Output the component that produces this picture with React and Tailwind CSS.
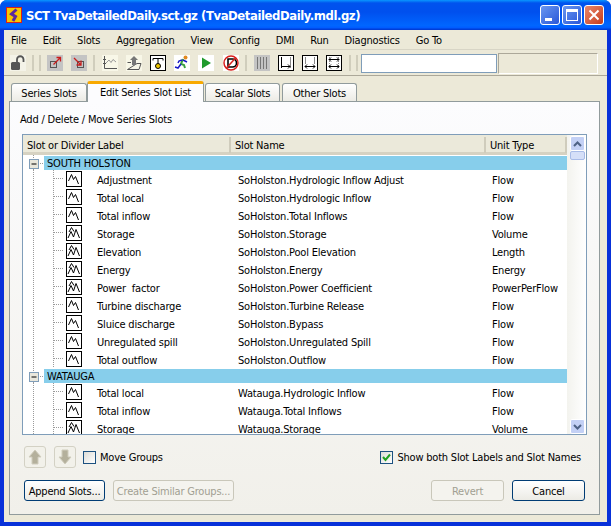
import React from "react";

const FONT = "font-['DejaVu_Sans_Condensed','DejaVu_Sans',sans-serif]";

const Spark1 = () => (
  <svg width="16" height="16" viewBox="0 0 16 16" className="shrink-0">
    <rect x="0.5" y="0.5" width="15" height="15" fill="#fff" stroke="#000" />
    <path d="M2.5 10 L5.5 3.5 L7.5 8.5 L9.5 5.5 L12.5 13" fill="none" stroke="#000" />
  </svg>
);
const Spark2 = () => (
  <svg width="16" height="16" viewBox="0 0 16 16" className="shrink-0">
    <rect x="0.5" y="0.5" width="15" height="15" fill="#fff" stroke="#000" />
    <path d="M3 7 L5.5 2.5 L8 6.5" fill="none" stroke="#000" />
    <path d="M2 13 L5 6.5 L7.5 12 L10 4.5 L13.5 13" fill="none" stroke="#000" />
  </svg>
);

const TreeLines = () => (
  <svg width="43" height="18" className="shrink-0">
    <path d="M10.5 0 V18" stroke="#9a9a9a" strokeDasharray="1 1" />
    <path d="M30.5 0 V18" stroke="#9a9a9a" strokeDasharray="1 1" />
    <path d="M31 8.5 H41" stroke="#9a9a9a" strokeDasharray="1 1" />
  </svg>
);

const Group = ({ name }) => (
  <div className="flex h-[15px] items-end">
    <div className="flex h-[15px] w-[21px] shrink-0 items-center">
      <svg width="21" height="15">
        <path d="M10.5 0 V15" stroke="#9a9a9a" strokeDasharray="1 1" />
        <path d="M15 8.5 H20" stroke="#9a9a9a" strokeDasharray="1 1" />
        <rect x="6.5" y="4.5" width="9" height="9" fill="#e9e7dc" stroke="#7f9db9" />
        <path d="M8.5 9 H13.5" stroke="#000" />
      </svg>
    </div>
    <div className="flex h-[14px] w-[524px] items-center bg-[#87ceeb] pl-[3px] text-black">{name}</div>
  </div>
);

const Row = ({ label, name, unit, two }) => (
  <div className="flex h-[18px] items-center">
    <TreeLines />
    {two ? <Spark2 /> : <Spark1 />}
    <span className="ml-[15px] w-[141px] shrink-0 whitespace-pre pt-[2px]">{label}</span>
    <span className="w-[254px] shrink-0 whitespace-nowrap pt-[2px]">{name}</span>
    <span className="whitespace-nowrap pt-[2px]">{unit}</span>
  </div>
);

const Tool = ({ children, className = "" }) => (
  <div className={`flex h-4 w-4 shrink-0 items-center justify-center ${className}`}>{children}</div>
);
const Sep = ({ className = "" }) => <div className={`h-[16px] w-[2px] shrink-0 bg-[#d0cdbc] ${className}`} />;

const OutlineBox = ({ children }) => (
  <svg width="16" height="16" viewBox="0 0 16 16">
    <rect x="0.5" y="0.5" width="15" height="15" fill="#fff" stroke="#000" />
    {children}
  </svg>
);

const Tab = ({ children, active, className = "" }) =>
  active ? (
    <div className={`relative z-10 -mb-px flex h-[21px] items-center justify-center rounded-t-[3px] border-x border-[#919b9c] border-t-[3px] border-t-[#f8a900] bg-[#fcfcfe] pb-[1px] text-black ${className}`}>
      {children}
    </div>
  ) : (
    <div className={`flex h-[18px] items-center justify-center rounded-t-[3px] border-x border-t border-[#919b9c] bg-gradient-to-b from-white to-[#ecebe5] pt-[2px] text-black ${className}`}>
      {children}
    </div>
  );

const Btn = ({ children, disabled, className = "" }) => (
  <div
    className={`flex h-[21px] items-center justify-center rounded-[3px] border pt-[2px] ${
      disabled
        ? "border-[#c9c7ba] bg-[#f4f3ee] text-[#a19f92]"
        : "border-[#003c74] bg-gradient-to-b from-white to-[#ecebe5] text-black"
    } ${className}`}
  >
    {children}
  </div>
);

const ArrowBtn = ({ down }) => (
  <div className="flex h-[22px] w-[22px] shrink-0 items-center justify-center rounded-[3px] border border-[#d3d1c4] bg-[#f2f1ea]">
    <svg width="14" height="16" viewBox="0 0 14 16">
      <path
        d={down ? "M4 1 H10 V8 H13 L7 15 L1 8 H4 Z" : "M4 15 H10 V8 H13 L7 1 L1 8 H4 Z"}
        fill="#b4b09c"
        stroke="#cfccbd"
      />
    </svg>
  </div>
);

const rowsA = [
  ["Adjustment", "SoHolston.Hydrologic Inflow Adjust", "Flow", 0],
  ["Total local", "SoHolston.Hydrologic Inflow", "Flow", 0],
  ["Total inflow", "SoHolston.Total Inflows", "Flow", 0],
  ["Storage", "SoHolston.Storage", "Volume", 1],
  ["Elevation", "SoHolston.Pool Elevation", "Length", 1],
  ["Energy", "SoHolston.Energy", "Energy", 1],
  ["Power  factor", "SoHolston.Power Coefficient", "PowerPerFlow", 1],
  ["Turbine discharge", "SoHolston.Turbine Release", "Flow", 0],
  ["Sluice discharge", "SoHolston.Bypass", "Flow", 0],
  ["Unregulated spill", "SoHolston.Unregulated Spill", "Flow", 0],
  ["Total outflow", "SoHolston.Outflow", "Flow", 0],
];
const rowsB = [
  ["Total local", "Watauga.Hydrologic Inflow", "Flow", 0],
  ["Total inflow", "Watauga.Total Inflows", "Flow", 0],
  ["Storage", "Watauga.Storage", "Volume", 1],
];

export default function App() {
  return (
    <div className={`flex h-[526px] w-[611px] flex-col overflow-hidden rounded-t-[7px] bg-[#0831d9] text-[11px] leading-none tracking-[-0.2px] text-black ${FONT}`}>
      {/* Title bar */}
      <div className="flex h-[30px] shrink-0 items-center bg-[linear-gradient(180deg,#0997ff_0,#0053ee_10%,#0050ee_40%,#0066ff_85%,#005bff_93%,#003dd7_97%,#003dd7_100%)] pl-[6px] pr-[7px]">
        <svg width="16" height="16" viewBox="0 0 16 16" className="shrink-0">
          <rect x="0.5" y="0.5" width="15" height="15" fill="#f6c800" stroke="#d8201c" />
          <path d="M10.5 2.5 L5.5 7 L9.5 9.5 L7 14" fill="none" stroke="#5b2a9e" strokeWidth="3" />
        </svg>
        <span className="ml-[4px] whitespace-nowrap text-[13px] font-bold tracking-[-0.45px] text-white">
          SCT TvaDetailedDaily.sct.gz (TvaDetailedDaily.mdl.gz)
        </span>
        <div className="ml-auto flex gap-[2px]">
          <div className="flex h-[20px] w-[20px] items-end rounded-[3px] border border-white bg-gradient-to-br from-[#6a96f0] to-[#2a55d8] pb-[3px] pl-[4px]">
            <div className="h-[3px] w-[7px] bg-white" />
          </div>
          <div className="flex h-[20px] w-[20px] items-center justify-center rounded-[3px] border border-white bg-gradient-to-br from-[#6a96f0] to-[#2a55d8]">
            <div className="h-[12px] w-[12px] border border-t-[3px] border-white" />
          </div>
          <div className="flex h-[20px] w-[20px] items-center justify-center rounded-[3px] border border-white bg-gradient-to-br from-[#e8866a] to-[#c63a18]">
            <svg width="12" height="12" viewBox="0 0 12 12">
              <path d="M1.5 1.5 L10.5 10.5 M10.5 1.5 L1.5 10.5" stroke="#fff" strokeWidth="2" />
            </svg>
          </div>
        </div>
      </div>

      <div className="mx-[4px] mb-[4px] flex min-h-0 flex-1 flex-col bg-[#ece9d8]">
        {/* Menu */}
        <div className="flex h-[20px] shrink-0 items-center gap-[16px] border-b border-[#d8d5c6] pl-[7px] pt-[2px]">
          {["File", "Edit", "Slots", "Aggregation", "View", "Config", "DMI", "Run", "Diagnostics", "Go To"].map((m) => (
            <span key={m}>{m}</span>
          ))}
        </div>

        {/* Toolbar */}
        <div className="flex h-[26px] shrink-0 items-center border-b border-[#aca899] pl-[6px] pt-[1px]">
          <Tool>
            <svg width="16" height="16" viewBox="0 0 16 16">
              <rect width="16" height="16" fill="#f4f3e8" />
              <rect x="1" y="7" width="9" height="8" rx="1.5" fill="#555" />
              <path d="M7 7 V4.5 A3 3 0 0 1 13.5 4.5 V7" fill="none" stroke="#555" strokeWidth="1.8" />
            </svg>
          </Tool>
          <Sep className="ml-[6px]" />
          <Sep className="ml-[5px]" />
          <Tool className="ml-[6px]">
            <svg width="16" height="16" viewBox="0 0 16 16">
              <rect width="16" height="16" fill="#c4c4c4" />
              <rect x="3.5" y="6.5" width="6" height="6" fill="none" stroke="#555" />
              <path d="M6.5 9.5 L13 3 M9.5 2.5 H13.5 V6.5" fill="none" stroke="#c81c1c" strokeWidth="1.3" />
            </svg>
          </Tool>
          <Tool className="ml-[8px]">
            <svg width="16" height="16" viewBox="0 0 16 16">
              <rect width="16" height="16" fill="#c4c4c4" />
              <rect x="6.5" y="6.5" width="6" height="6" fill="none" stroke="#555" />
              <path d="M3 3 L9.5 9.5 M10 5.5 V10 H5.5" fill="none" stroke="#c81c1c" strokeWidth="1.3" />
            </svg>
          </Tool>
          <Sep className="ml-[6px]" />
          <Tool className="ml-[7px]">
            <svg width="16" height="16" viewBox="0 0 16 16">
              <rect width="16" height="16" fill="#f8f7e8" />
              <path d="M2.5 1 V13.5 H15" fill="none" stroke="#555" />
              <path d="M4 8 L7 5 L9 7.5 L11 4.5 L14 7" fill="none" stroke="#999" />
              <path d="M1 4.5 H4 M1 8.5 H4" stroke="#555" strokeDasharray="1 1" />
            </svg>
          </Tool>
          <Tool className="ml-[8px]">
            <svg width="16" height="16" viewBox="0 0 16 16">
              <rect width="16" height="16" fill="#f8f7e8" />
              <path d="M1.5 7.5 H5 M11 8.5 H15 L13 14.5 H1.5 Z" fill="none" stroke="#555" />
              <path d="M6 10 V5 H4 L8 1 L12 5 H10 V10 Z" fill="#777" />
            </svg>
          </Tool>
          <Tool className="ml-[8px]">
            <OutlineBox>
              <path d="M3 3.5 H13 M3 3.5 L3 5.5 M13 3.5 L13 5.5 M8 4 V9" stroke="#000" />
              <circle cx="8" cy="11" r="2.5" fill="#f0c800" stroke="#000" />
            </OutlineBox>
          </Tool>
          <Tool className="ml-[8px]">
            <svg width="16" height="16" viewBox="0 0 16 16">
              <rect width="16" height="16" fill="#fff" />
              <circle cx="11.5" cy="2.5" r="2" fill="#e08a20" />
              <path d="M9 4 L7 9 L10 10 L11 13" fill="none" stroke="#3aa040" strokeWidth="2" />
              <path d="M7 9 L4 13 L1 12 M8 5 L5 6 L4 8 M9 5 L13 7" fill="none" stroke="#1a1ac8" strokeWidth="1.5" />
            </svg>
          </Tool>
          <Tool className="ml-[8px]">
            <svg width="16" height="16" viewBox="0 0 16 16">
              <rect width="16" height="16" fill="#fff" />
              <path d="M4 2.5 L13 8 L4 13.5 Z" fill="#1f9a2c" />
            </svg>
          </Tool>
          <Tool className="ml-[9px]">
            <svg width="16" height="16" viewBox="0 0 16 16">
              <rect width="16" height="16" fill="#fff" />
              <path d="M5 4 H9.5 A4 4 0 0 1 9.5 12 H5 Z" fill="#fff" stroke="#000" strokeWidth="1.6" />
              <circle cx="8" cy="8" r="7" fill="none" stroke="#d8201c" strokeWidth="1.5" />
              <path d="M3.5 13 L12.5 3" stroke="#d8201c" strokeWidth="1.5" />
            </svg>
          </Tool>
          <Sep className="ml-[6px]" />
          <Tool className="ml-[7px]">
            <svg width="16" height="16" viewBox="0 0 16 16">
              <rect width="16" height="16" fill="#c4c4c4" />
              <path d="M3.5 2 V14 M6.5 2 V14 M9.5 2 V14 M12.5 2 V14" stroke="#777" />
            </svg>
          </Tool>
          <Tool className="ml-[8px]">
            <OutlineBox>
              <path d="M12.5 2 V13" stroke="#888" />
              <path d="M3.5 2 V13 M3.5 11.5 H12 M10 9.5 L12 11.5 L10 13.5" fill="none" stroke="#000" />
            </OutlineBox>
          </Tool>
          <Tool className="ml-[8px]">
            <OutlineBox>
              <path d="M3.5 2 V9 M12.5 2 V9" stroke="#888" />
              <path d="M3 11.5 H13 M5 9.5 L3 11.5 L5 13.5 M11 9.5 L13 11.5 L11 13.5" fill="none" stroke="#000" />
            </OutlineBox>
          </Tool>
          <Tool className="ml-[8px]">
            <OutlineBox>
              <path d="M3.5 2 V14 M12.5 2 V14" stroke="#888" strokeDasharray="1 1" />
              <path d="M3 4.5 H13 M5 2.5 L3 4.5 L5 6.5 M11 2.5 L13 4.5 L11 6.5 M3 11.5 H13 M5 9.5 L3 11.5 L5 13.5 M11 9.5 L13 11.5 L11 13.5" fill="none" stroke="#000" />
            </OutlineBox>
          </Tool>
          <Sep className="ml-[7px]" />
          <Sep className="ml-[5px]" />
          <div className="ml-[3px] h-[19px] w-[136px] shrink-0 border border-[#7f9db9] bg-white" />
          <div className="ml-[1px] h-[21px] w-[100px] shrink-0 border border-b-white border-l-[#aca899] border-r-white border-t-[#aca899]" />
        </div>

        {/* Tabs */}
        <div className="flex h-[25px] shrink-0 items-end pl-[7px]">
          <Tab className="w-[76px]">Series Slots</Tab>
          <Tab active className="w-[117px]">Edit Series Slot List</Tab>
          <Tab className="ml-[1px] w-[75px]">Scalar Slots</Tab>
          <Tab className="ml-[2px] w-[75px]">Other Slots</Tab>
        </div>

        {/* Panel */}
        <div className="ml-[5px] mr-[7px] flex h-[414px] shrink-0 flex-col border border-[#919b9c] bg-gradient-to-b from-[#fcfcfe] to-[#f1f0ea] px-[12px]">
          <div className="-ml-[2px] mt-[12px] h-[12px] whitespace-nowrap">Add / Delete / Move Series Slots</div>
          <div className="mt-[8px] flex h-[301px] shrink-0 overflow-hidden border border-[#7f9db9] bg-white">
            <div className="flex min-w-0 flex-1 flex-col">
              <div className="flex h-[20px] shrink-0 items-center border-b-[3px] border-[#d6d2c2] bg-[#ebe9da] pt-[2px]">
                <span className="flex h-[16px] w-[208px] shrink-0 items-center border-r-2 border-[#cfccbc] pl-[4px] pt-[1px]">Slot or Divider Label</span>
                <span className="flex h-[16px] w-[255px] shrink-0 items-center border-r-2 border-[#cfccbc] pl-[4px] pt-[1px]">Slot Name</span>
                <span className="flex h-[16px] w-[81px] shrink-0 items-center border-r-2 border-[#cfccbc] pl-[4px] pt-[1px]">Unit Type</span>
              </div>
              <div className="min-h-0 flex-1 overflow-hidden">
                <Group name="SOUTH HOLSTON" />
                {rowsA.map((r) => (
                  <Row key={r[0]} label={r[0]} name={r[1]} unit={r[2]} two={r[3]} />
                ))}
                <Group name="WATAUGA" />
                {rowsB.map((r) => (
                  <Row key={r[0]} label={r[0]} name={r[1]} unit={r[2]} two={r[3]} />
                ))}
              </div>
            </div>
            <div className="flex w-[19px] shrink-0 flex-col justify-between bg-gradient-to-r from-[#f3f3ee] to-white pl-[3px] pt-[1px]">
              <div>
                <div className="flex h-[15px] w-[15px] items-center justify-center rounded-[2px] border border-white bg-[#c3d0f5]">
                  <svg width="9" height="6" viewBox="0 0 9 6">
                    <path d="M1 5 L4.5 1.5 L8 5" fill="none" stroke="#4d6185" strokeWidth="2" />
                  </svg>
                </div>
                <div className="h-[9px] w-[15px] rounded-[2px] border border-[#a8bbe8] bg-[#d5dff8]" />
              </div>
              <div className="flex h-[15px] w-[15px] items-center justify-center rounded-[2px] border border-white bg-[#c3d0f5]">
                <svg width="9" height="6" viewBox="0 0 9 6">
                  <path d="M1 1 L4.5 4.5 L8 1" fill="none" stroke="#4d6185" strokeWidth="2" />
                </svg>
              </div>
            </div>
          </div>

          {/* Options row */}
          <div className="mt-[11px] flex h-[22px] shrink-0 items-center pl-[2px]">
            <ArrowBtn />
            <div className="ml-[8px]"><ArrowBtn down /></div>
            <div className="ml-[7px] h-[13px] w-[13px] shrink-0 border border-[#1c5180] bg-gradient-to-br from-[#dcdcd7] to-white" />
            <span className="ml-[4px] whitespace-nowrap">Move Groups</span>
            <div className="ml-auto flex items-center pr-[6px]">
              <div className="flex h-[13px] w-[13px] shrink-0 items-center justify-center border border-[#1c5180] bg-gradient-to-br from-[#dcdcd7] to-white">
                <svg width="9" height="9" viewBox="0 0 9 9">
                  <path d="M1 4 L3.5 7 L8 1.5" fill="none" stroke="#21a121" strokeWidth="2" />
                </svg>
              </div>
              <span className="ml-[4px] whitespace-nowrap">Show both Slot Labels and Slot Names</span>
            </div>
          </div>

          {/* Buttons */}
          <div className="mt-[12px] flex shrink-0 items-center pl-[2px] pr-[2px]">
            <Btn className="w-[81px]">Append Slots...</Btn>
            <Btn disabled className="ml-[8px] w-[121px]">Create Similar Groups...</Btn>
            <Btn disabled className="ml-auto w-[73px]">Revert</Btn>
            <Btn className="ml-[8px] w-[73px]">Cancel</Btn>
          </div>
        </div>
      </div>
    </div>
  );
}
